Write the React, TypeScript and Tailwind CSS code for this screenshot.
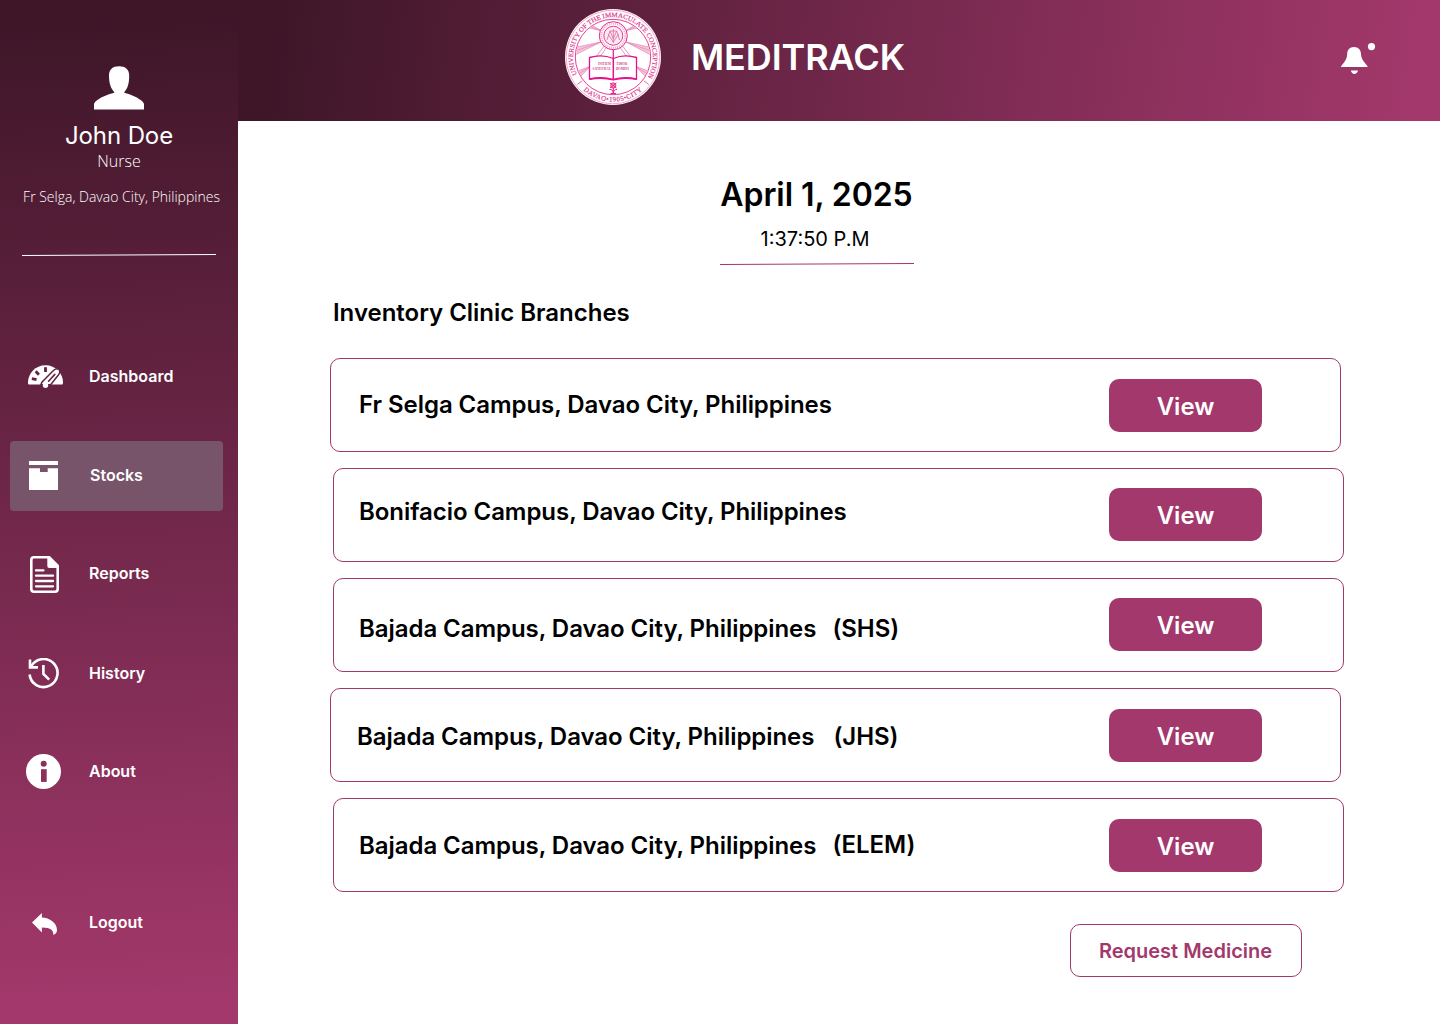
import type { ReactNode } from "react";

function Seal() {
  const rays = [
    [37, 22, 14, 13],
    [36, 33, 10, 42],
    [60, 22, 82, 13],
    [61, 33, 86, 42],
    [26, 57, 12, 66],
    [70, 57, 84, 66],
  ];
  return (
    <svg className="h-24 w-24" viewBox="0 0 96 96" fill="none">
      <defs>
        <path id="ring-top" d="M12.6 66.8A40 40 0 1 1 83.4 66.8" />
        <path id="ring-bottom" d="M9.4 70.3A44.6 44.6 0 0 0 86.6 70.3" />
        <clipPath id="seal-field">
          <circle cx="48" cy="48" r="37" />
        </clipPath>
      </defs>
      <circle cx="48" cy="48" r="48" fill="#fff" />
      <circle cx="48" cy="48" r="46.8" stroke="#ee7fb4" strokeWidth="0.7" />
      <circle cx="48" cy="48" r="37.7" stroke="#e5268a" strokeWidth="0.9" />
      <g clipPath="url(#seal-field)">
        {rays.map(([x1, y1, x2, y2], i) => {
          const length = Math.hypot(x2 - x1, y2 - y1);
          const nx = (-(y2 - y1) / length) * 3.6;
          const ny = ((x2 - x1) / length) * 3.6;
          return (
            <g key={i}>
              <polygon points={`${x1},${y1} ${x2 + nx},${y2 + ny} ${x2 - nx},${y2 - ny}`} fill="#f6c4dc" />
              <path
                d={`M${x1} ${y1} L${x2 + nx} ${y2 + ny} M${x1} ${y1} L${x2} ${y2} M${x1} ${y1} L${x2 - nx} ${y2 - ny}`}
                stroke="#dd6ba3"
                strokeWidth="0.5"
              />
            </g>
          );
        })}
      </g>
      <path d="M12.2 75.5L17.2 71.8M83.8 75.5L78.8 71.8" stroke="#dd3c8c" strokeWidth="0.8" />
      <g fill="#dc3489" stroke="#dc3489" strokeWidth="0.15" fontFamily="Liberation Serif, serif">
        <text fontSize="6.6" textLength="164" lengthAdjust="spacingAndGlyphs">
          <textPath href="#ring-top" startOffset="1.5">
            UNIVERSITY OF THE IMMACULATE CONCEPTION
          </textPath>
        </text>
        <text textAnchor="middle" fontSize="6.8" letterSpacing="0.5">
          <textPath href="#ring-bottom" startOffset="50%">
            DAVAO•1905•CITY
          </textPath>
        </text>
      </g>
      <path d="M39 37L31 48M41 39L35 48M57.5 37L66 48M55.5 39L62 48" stroke="#dd6ba3" strokeWidth="0.7" />
      <path d="M48.3 40V50" stroke="#e5268a" strokeWidth="1.3" />
      <circle cx="48.3" cy="26.7" r="14" fill="#fff" stroke="#e5268a" strokeWidth="1" />
      <circle cx="48.3" cy="26.7" r="12" stroke="#f2a3c8" strokeWidth="2" strokeDasharray="1 1" />
      <circle cx="48.3" cy="26.7" r="9.5" fill="#fce9f2" stroke="#e5268a" strokeWidth="0.9" />
      <path
        d="M42 31L45 22L48.3 30L51.6 22L54.6 31M48.3 20V34M43 25L48.3 33L53.6 25M45 22H51.6"
        stroke="#dd6ba3"
        strokeWidth="0.8"
      />
      <path
        d="M24.5 48.5Q37 45 48.3 49.5Q59 45 71.5 48.5V70Q59 67 48.3 70.5Q37 67 24.5 70Z"
        fill="#fff"
        stroke="#e5128a"
        strokeWidth="1.3"
      />
      <path d="M48.3 50V70M24.5 70.3Q37 67.8 48.3 70.8Q59 67.8 71.5 70.3" stroke="#e5128a" strokeWidth="1.5" />
      <g fill="#cf4a8d" fontFamily="Liberation Serif, serif" fontSize="4" fontWeight="700" textAnchor="middle">
        <text>
          <tspan x="39.5" y="56" textLength="13" lengthAdjust="spacingAndGlyphs">INITIUM</tspan>
          <tspan x="36.6" y="61" textLength="18" lengthAdjust="spacingAndGlyphs">SAPIENTIAE</tspan>
        </text>
        <text>
          <tspan x="56.8" y="56" textLength="11" lengthAdjust="spacingAndGlyphs">TIMOR</tspan>
          <tspan x="57.2" y="61" textLength="13" lengthAdjust="spacingAndGlyphs">DOMINI</tspan>
        </text>
      </g>
      <g stroke="#e5268a" strokeWidth="1">
        <circle cx="48.3" cy="76.5" r="2.6" fill="#f3a4ca" />
        <path d="M45 74L51.5 79M51.5 74L45 79M48.3 79V85M44.5 80.5Q48 80 48.3 84Q49 80 52 80.5M45.5 84.5H51" />
      </g>
    </svg>
  );
}

function UserIcon() {
  return (
    <svg className="h-11 w-[50px]" viewBox="0 0 50 44" fill="#fff">
      <path d="M25 0.2C18.5 0.2 15 3.5 15 9.5C15 16.5 16.5 22.5 20.6 26.4C16 28 8 30.2 3 34.2C0.6 36.2 0 37.2 0 38.5V43.6H50V38.5C50 37.2 49.4 36.2 47 34.2C42 30.2 34.5 28 30 26.4C34 22.5 35.2 16.5 35.2 9.5C35.2 3.5 31.5 0.2 25 0.2Z" />
    </svg>
  );
}

function BellIcon() {
  return (
    <svg className="h-8 w-9" viewBox="0 0 36 32" fill="#fff">
      <path d="M14 4C9.5 4 7.3 7 7.2 11C7 17 3.8 19.5 0.8 23.9H27.9C25 19.5 21.2 17 21 11C20.8 7 18.5 4 14 4Z" />
      <path d="M10.8 27.5H18C17.5 29.8 16 31 14.4 31C12.8 31 11.3 29.8 10.8 27.5Z" />
      <circle cx="31.5" cy="3.6" r="3.6" />
    </svg>
  );
}

function DashboardIcon() {
  return (
    <svg className="h-[23px] w-[35px]" viewBox="0 0 35 23" fill="none">
      <path
        d="M17.5 0.2C7.5 0.2 0 8.5 0 17.2C0 18.6 0.2 19.3 0.7 19.6H34.3C34.8 19.2 35 18.4 35 17.2C35 8.5 27.5 0.2 17.5 0.2Z"
        fill="#fff"
      />
      <g fill="#64223f">
        <rect x="16.1" y="2.2" width="2.8" height="4.8" />
        <rect x="-1.4" y="-2.4" width="2.8" height="4.8" transform="translate(9.3 8) rotate(-42)" />
        <rect x="-2.4" y="-1.4" width="4.8" height="2.8" transform="translate(6.2 14.2) rotate(12)" />
      </g>
      <path
        d="M12.8 19.8C13.2 17.8 14 16.8 15.6 15.4L24.4 6.4C26.6 4.2 29.2 3 31 4.6C32.6 6.2 31.6 8.4 30.4 10L22.6 19.8Z"
        fill="#fff"
        stroke="#64223f"
        strokeWidth="1.5"
      />
      <circle cx="17.5" cy="20.3" r="2.7" fill="#fff" />
      <path d="M26.8 9.4L20.6 16.2" stroke="#64223f" strokeWidth="1.6" strokeLinecap="round" />
    </svg>
  );
}

function StocksIcon() {
  return (
    <svg className="h-[29px] w-[29px]" viewBox="0 0 29 29" fill="#fff">
      <path d="M0 0H29V4H0ZM0 7.2H11V11H18.7V7.2H29V29H0Z" />
    </svg>
  );
}

function ReportsIcon() {
  return (
    <svg className="h-[37px] w-[29px]" viewBox="0 0 29 37" fill="none">
      <path
        d="M18.5 1.3H4Q1.3 1.3 1.3 4V33Q1.3 35.7 4 35.7H25Q27.7 35.7 27.7 33V10.5"
        stroke="#fff"
        strokeWidth="2.6"
      />
      <path d="M17.3 0H19.8L29 9.2V12H19.3Q17.3 12 17.3 10Z" fill="#fff" />
      <path d="M6 14.4H13.4M6 19.7H23M6 25H23M6 30.3H23" stroke="#fff" strokeWidth="2.3" strokeLinecap="round" />
    </svg>
  );
}

function HistoryIcon() {
  return (
    <svg className="h-[31px] w-[31px]" viewBox="0 0 31 31" fill="none" stroke="#fff" strokeWidth="2.6">
      <path d="M2.8 9.2A14 14 0 1 1 1.6 16.5" />
      <path d="M2 1.5V9.4H10" />
      <path d="M15.4 7V16L21.2 21.6" />
    </svg>
  );
}

function AboutIcon() {
  return (
    <svg className="h-[35px] w-[35px]" viewBox="0 0 35 35" fill="none">
      <circle cx="17.5" cy="17.5" r="17.5" fill="#fff" />
      <circle cx="17.7" cy="9.7" r="3" fill="#8b305c" />
      <rect x="15" y="15.2" width="5.7" height="12.7" fill="#8b305c" />
    </svg>
  );
}

function LogoutIcon() {
  return (
    <svg className="h-[22px] w-[25px]" viewBox="0 0 25 22" fill="#fff">
      <path d="M0 9.6L9.9 0V4.5C17.5 4.6 25 10 25 17C25 19 24 21 21.3 22C21.8 17.5 19 14.5 9.9 14.5V19.4Z" />
    </svg>
  );
}

type NavItem = { label: string; icon: ReactNode; box: string; iconBox: string; text: string };

const navItems: NavItem[] = [
  { label: "Dashboard", icon: <DashboardIcon />, box: "mt-[86px]", iconBox: "pl-[18px] w-[79px] pb-0.5", text: "pb-0.5" },
  { label: "Stocks", icon: <StocksIcon />, box: "mt-[29px] bg-[#77546a]", iconBox: "pl-[19px] w-20 pb-0.5", text: "pb-0.5" },
  { label: "Reports", icon: <ReportsIcon />, box: "mt-[29px]", iconBox: "pl-5 w-[79px] pb-0.5", text: "pb-1" },
  { label: "History", icon: <HistoryIcon />, box: "mt-[29px]", iconBox: "pl-[18px] w-[79px] pb-px", text: "pb-0.5" },
  { label: "About", icon: <AboutIcon />, box: "mt-7", iconBox: "pl-4 w-[79px] pb-0.5", text: "pb-0.5" },
  { label: "Logout", icon: <LogoutIcon />, box: "mt-[82px]", iconBox: "pl-[22px] w-[79px] pb-px", text: "pb-1" },
];

function Sidebar() {
  return (
    <aside className="flex h-[1024px] w-[238px] shrink-0 flex-col bg-linear-[178deg,#3e1628_2%,#a2386b_97%] text-white">
      <div className="flex flex-col items-center pt-[66px]">
        <UserIcon />
        <p className="mt-[9px] text-2xl leading-[34px] tracking-[-0.1px]">John Doe</p>
        <p className="-mt-0.5 font-['Open_Sans'] text-base leading-5 font-light">Nurse</p>
        <p className="mt-4 ml-[5px] font-['Open_Sans'] text-sm leading-5 font-light whitespace-nowrap">
          Fr Selga, Davao City, Philippines
        </p>
      </div>
      <svg className="mt-[46px] ml-[22px] h-[3px] w-[194px]" viewBox="0 0 194 3">
        <path d="M0 2.5L194 1.5" stroke="#fff" />
      </svg>
      <nav className="flex flex-col pl-2.5">
        {navItems.map((item) => (
          <a key={item.label} className={`flex h-[70px] w-[213px] items-center rounded ${item.box}`}>
            <span className={`shrink-0 ${item.iconBox}`}>{item.icon}</span>
            <span className={`text-base leading-5 font-semibold ${item.text}`}>{item.label}</span>
          </a>
        ))}
      </nav>
    </aside>
  );
}

const branches = [
  { title: "Fr Selga Campus, Davao City, Philippines", tag: "", card: "ml-[92px] pl-7", text: "pt-[31px]", tagBox: "", button: "mt-5 mr-[78px]" },
  { title: "Bonifacio Campus, Davao City, Philippines", tag: "", card: "ml-[95px] pl-[25px]", text: "pt-7", tagBox: "", button: "mt-[19px] mr-[81px]" },
  { title: "Bajada Campus, Davao City, Philippines", tag: "(SHS)", card: "ml-[95px] pl-[25px]", text: "pt-[35px]", tagBox: "pl-4", button: "mt-[19px] mr-[81px]" },
  { title: "Bajada Campus, Davao City, Philippines", tag: "(JHS)", card: "ml-[92px] pl-[26px]", text: "pt-[33px]", tagBox: "pl-[19px]", button: "mt-5 mr-[78px]" },
  { title: "Bajada Campus, Davao City, Philippines", tag: "(ELEM)", card: "ml-[95px] pl-[25px]", text: "pt-8", tagBox: "pl-4 -mt-px", button: "mt-5 mr-[81px]" },
];

export default function App() {
  return (
    <div className="flex h-[1024px] w-[1440px] overflow-hidden bg-white font-['Inter',sans-serif] text-black">
      <Sidebar />
      <div className="flex flex-1 flex-col">
        <header className="flex h-[121px] items-start bg-linear-[98deg,#3e1628_3%,#a2386b_97%] text-white">
          <div className="pt-[9px] pl-[327px]">
            <Seal />
          </div>
          <h1 className="mt-[33px] ml-[30px] text-4xl leading-12 font-semibold tracking-[-0.1px]">MEDITRACK</h1>
          <div className="mt-[43px] mr-16 ml-auto">
            <BellIcon />
          </div>
        </header>
        <main>
          <div className="ml-[482px] flex w-[194px] flex-col items-center">
            <h2 className="mt-[53px] -ml-px text-[32px] leading-[42px] font-semibold tracking-[-0.08px] whitespace-nowrap">
              April 1, 2025
            </h2>
            <p className="mt-[9px] -ml-1 text-xl leading-7">1:37:50 P.M</p>
            <svg className="mt-2.5 h-[3px] w-[194px]" viewBox="0 0 194 3">
              <path d="M0 1.5L194 0.5" stroke="#a2386b" />
            </svg>
          </div>
          <h3 className="mt-[31px] ml-[95px] text-2xl leading-8 font-semibold tracking-[-0.02px]">
            Inventory Clinic Branches
          </h3>
          <div className="mt-[29px] flex flex-col gap-4">
            {branches.map((b, i) => (
              <section
                key={i}
                className={`flex h-[94px] w-[1011px] items-start rounded-[10px] border border-[#a2386b] ${b.card}`}
              >
                <div
                  className={`flex text-2xl leading-[30px] font-semibold tracking-[-0.05px] whitespace-nowrap ${b.text}`}
                >
                  <span>{b.title}</span>
                  <span className={b.tagBox}>{b.tag}</span>
                </div>
                <button
                  className={`ml-auto h-[53px] w-[153px] shrink-0 rounded-[10px] bg-[#a2386b] pt-0.5 text-2xl font-semibold text-white ${b.button}`}
                >
                  View
                </button>
              </section>
            ))}
          </div>
          <button className="mt-8 ml-[832px] h-[53px] w-[232px] rounded-[10px] border border-[#a2386b] pr-px text-xl font-semibold text-[#a2386b]">
            Request Medicine
          </button>
        </main>
      </div>
    </div>
  );
}
